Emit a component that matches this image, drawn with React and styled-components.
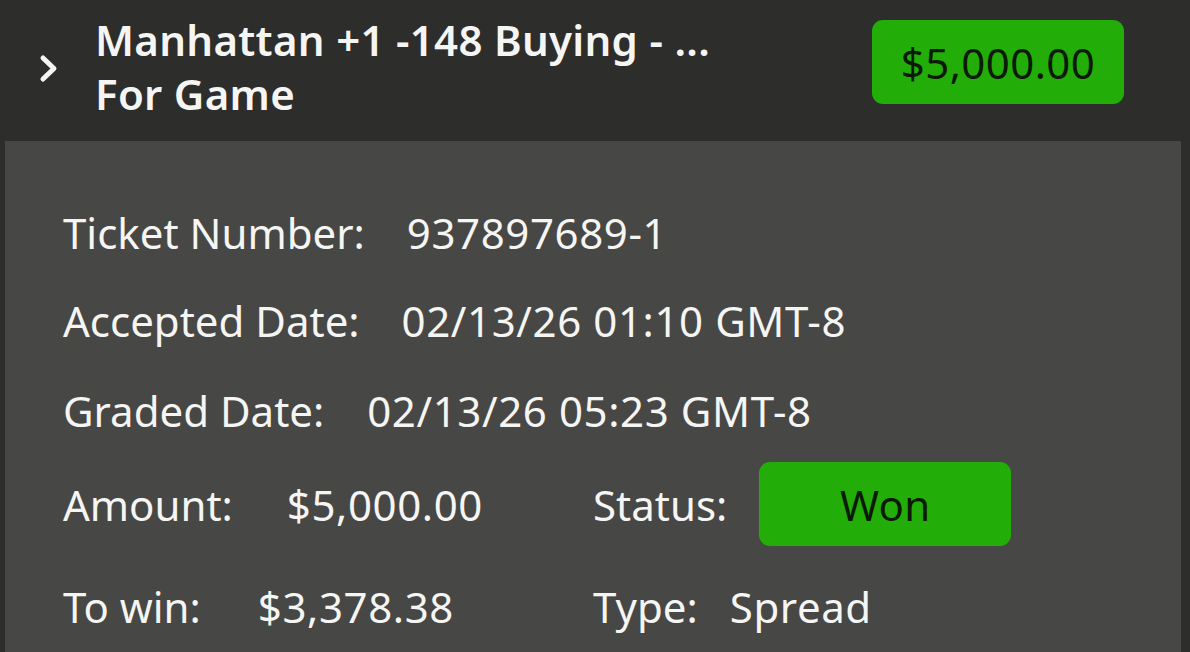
import React from "react";
import styled, { createGlobalStyle } from "styled-components";

const Global = createGlobalStyle`
  html, body { margin: 0; padding: 0; background: #2d2d2b; }
  body { font-family: "Noto Sans", "Open Sans", sans-serif; }
  * { box-sizing: border-box; }
`;

const Page = styled.div`
  width: 1190px;
  height: 652px;
  overflow: hidden;
  background: #2d2d2b;
  display: flex;
  flex-direction: column;
`;

const Header = styled.header`
  height: 141px;
  flex: none;
  display: flex;
  align-items: flex-start;
  padding: 13px 66px 0 38px;
  color: #f5f5f3;
`;

const Chevron = styled.svg`
  flex: none;
  width: 22px;
  height: 30px;
  margin-top: 41px;
  margin-right: 35px;
`;

const Title = styled.div`
  flex: none;
  width: 680px;
  font-size: 42px;
  font-weight: 600;
  letter-spacing: 0.3px;
  line-height: 54px;
  color: #f5f5f3;
`;

const Spacer = styled.div`
  flex: 1;
`;

const Pill = styled.div`
  flex: none;
  width: 252px;
  height: 84px;
  border-radius: 11px;
  background: #22ad08;
  color: #0b1a06;
  font-size: 42px;
  font-weight: 400;
  letter-spacing: 0.4px;
  display: flex;
  align-items: center;
  justify-content: center;
  margin-top: ${(p) => p.$mt || 0}px;
`;

const Panel = styled.section`
  flex: 1;
  margin: 0 9px 0 5px;
  background: #474745;
  padding: 63px 0 0 58px;
  display: flex;
  flex-direction: column;
  color: #f5f5f3;
  font-size: 42px;
  line-height: 57px;
`;

const Row = styled.div`
  display: flex;
  align-items: center;
  margin-top: ${(p) => p.$mt || 0}px;
`;

const Field = styled.div`
  display: flex;
  align-items: center;
  width: ${(p) => (p.$w ? `${p.$w}px` : "auto")};
  flex: none;
`;

const Label = styled.span`
  margin-right: ${(p) => p.$gap}px;
  white-space: nowrap;
`;

const Value = styled.span`
  white-space: nowrap;
  letter-spacing: 0.6px;
`;

export default function App() {
  return (
    <Page>
      <Global />
      <Header>
        <Chevron viewBox="0 0 22 30">
          <path
            d="M5 4 L16 14.5 L5 25"
            fill="none"
            stroke="#f5f5f3"
            strokeWidth="5"
            strokeLinecap="round"
            strokeLinejoin="round"
          />
        </Chevron>
        <Title>Manhattan +1 -148 Buying - ... For Game</Title>
        <Spacer />
        <Pill $mt={7}>$5,000.00</Pill>
      </Header>
      <Panel>
        <Row>
          <Label $gap={42}>Ticket Number:</Label>
          <Value>937897689-1</Value>
        </Row>
        <Row $mt={31}>
          <Label $gap={42}>Accepted Date:</Label>
          <Value>02/13/26 01:10 GMT-8</Value>
        </Row>
        <Row $mt={33}>
          <Label $gap={43}>Graded Date:</Label>
          <Value>02/13/26 05:23 GMT-8</Value>
        </Row>
        <Row $mt={23}>
          <Field $w={530}>
            <Label $gap={54}>Amount:</Label>
            <Value>$5,000.00</Value>
          </Field>
          <Field>
            <Label $gap={32}>Status:</Label>
            <Pill>Won</Pill>
          </Field>
        </Row>
        <Row $mt={32}>
          <Field $w={530}>
            <Label $gap={57}>To win:</Label>
            <Value>$3,378.38</Value>
          </Field>
          <Field>
            <Label $gap={32}>Type:</Label>
            <Value>Spread</Value>
          </Field>
        </Row>
      </Panel>
    </Page>
  );
}
